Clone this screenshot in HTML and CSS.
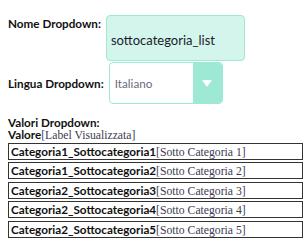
FILE: index.html
```html
<!DOCTYPE html>
<html lang="it">
<head>
    <meta charset="UTF-8">
    <title>Dropdown</title>
    <link rel="stylesheet" href="styles.css">
</head>
<body>
    <div class="field field-top">
        <label class="field-label" for="nome">Nome Dropdown:</label>
        <div class="name-box" id="nome">sottocategoria_list</div>
    </div>
    <div class="field field-mid">
        <label class="field-label" for="lingua">Lingua Dropdown:</label>
        <div class="select-box" id="lingua">
            <span class="select-value">Italiano</span>
            <span class="select-arrow"><span class="triangle"></span></span>
        </div>
    </div>

    <div class="values">
        <div class="values-title">Valori Dropdown:</div>
        <div class="values-head"><b>Valore</b><span class="note">[Label Visualizzata]</span></div>
        <div class="value-row"><b>Categoria1_Sottocategoria1</b><span class="note">[Sotto Categoria 1]</span></div>
        <div class="value-row"><b>Categoria1_Sottocategoria2</b><span class="note">[Sotto Categoria 2]</span></div>
        <div class="value-row"><b>Categoria2_Sottocategoria3</b><span class="note">[Sotto Categoria 3]</span></div>
        <div class="value-row"><b>Categoria2_Sottocategoria4</b><span class="note">[Sotto Categoria 4]</span></div>
        <div class="value-row"><b>Categoria2_Sottocategoria5</b><span class="note">[Sotto Categoria 5]</span></div>
    </div>
</body>
</html>
```

FILE: styles.css
```css
body {
    font-family: Lato, sans-serif;
    font-size: 11.7px;
    color: #111;
    margin: 0;
    padding: 15px 2px 0 8px;
    background-color: #fff;
}
.field {
    display: flex;
    gap: 5px;
}
.field-top {
    align-items: flex-start;
}
.field-mid {
    align-items: center;
    margin-top: 1px;
}
.field-label {
    font-weight: bold;
    padding-top: 1px;
}
.field-mid .field-label {
    padding-top: 0;
}
.name-box {
    box-sizing: border-box;
    width: 139px;
    height: 46px;
    padding: 4px 4px 0;
    display: flex;
    align-items: center;
    font-size: 13px;
    color: #1a1a2a;
    background-color: #d4f5ec;
    border: 1px solid #9de9d6;
    border-radius: 4px;
}
.select-box {
    box-sizing: border-box;
    width: 114px;
    height: 42px;
    display: flex;
    border: 1px solid #9de9d6;
    border-radius: 4px;
    overflow: hidden;
}
.select-value {
    flex: 1;
    display: flex;
    align-items: center;
    padding-left: 5px;
    font-size: 11.7px;
    color: #6a6a80;
}
.select-arrow {
    width: 29px;
    background-color: #9de9d6;
    display: flex;
    align-items: center;
    justify-content: center;
}
.triangle {
    width: 0;
    height: 0;
    border-left: 5px solid transparent;
    border-right: 5px solid transparent;
    border-top: 7px solid #fff;
}
.values {
    margin-top: 12px;
}
.values-title,
.values-head {
    height: 12px;
    line-height: 12.5px;
}
.values-title {
    font-weight: bold;
}
.values-head {
    margin-bottom: 1.5px;
}
.note {
    font-family: "Liberation Serif", serif;
    color: #3c3c52;
}
.value-row {
    box-sizing: border-box;
    height: 17px;
    margin-top: 2.5px;
    padding-left: 2px;
    line-height: 15px;
    border: 1px solid #333;
}
```
